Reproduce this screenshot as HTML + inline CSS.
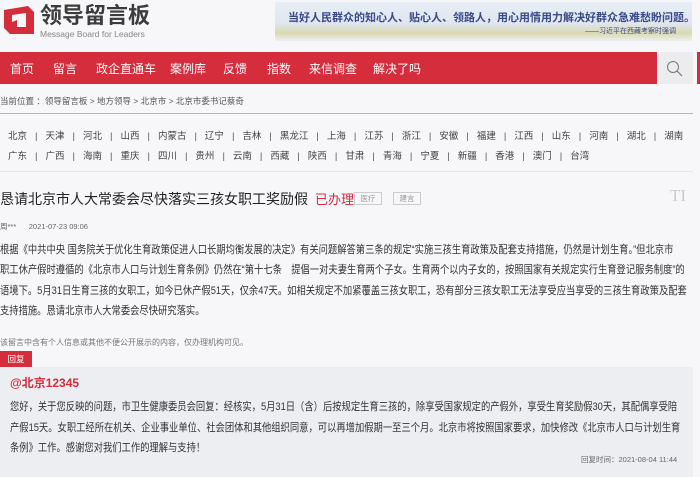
<!DOCTYPE html>
<html><head><meta charset="utf-8"><style>
*{margin:0;padding:0;box-sizing:border-box}
body{width:700px;height:477px;overflow:hidden;background:#f7f6f8;font-family:"Liberation Sans","Noto Sans CJK SC",sans-serif;color:#333;position:relative}
.a{position:absolute;white-space:nowrap}
.nav{position:absolute;left:0;top:52px;width:657px;height:32px;background:#d62d3c}
.nav span{position:absolute;top:8px;color:#fff;font-size:12px}
.prov{font-size:9.5px;color:#444}
.prov i{font-style:normal;margin:0 8px;color:#555}
.p{font-size:11px;color:#333;line-height:20.3px;white-space:nowrap;transform:scaleX(0.845);transform-origin:0 0}
</style></head><body>
<svg class="a" style="left:2px;top:4px" width="34" height="32" viewBox="0 0 34 32"><path d="M2 6 L26 2 L32 8 L32 30 L8 30 L2 24 Z" fill="#d62d3c"/><path d="M10 11 L24 9 L24 23 L15 23 L15 16 L10 18 Z" fill="#f7f6f8"/></svg>
<div class="a" style="left:40px;top:4px;font-size:22px;line-height:24px;font-weight:bold;color:#3c3c3c">领导留言板</div>
<div class="a" style="left:40px;top:29px;font-size:8.5px;line-height:10px;color:#888">Message Board for Leaders</div>
<div class="a" style="left:275px;top:2px;width:417px;height:39px;background:linear-gradient(180deg,#e8eef6 0%,#dfe6ef 55%,#d9d9b0 80%,#eef0f2 100%)"></div>
<div class="a" style="left:288px;top:9px;font-size:11px;font-weight:bold;color:#3a4a8a">当好人民群众的知心人、贴心人、领路人，用心用情用力解决好群众急难愁盼问题。</div>
<div class="a" style="left:585px;top:26px;font-size:7px;color:#3a4a8a">——习近平在西藏考察时强调</div>
<div class="nav"><span style="left:10px">首页</span><span style="left:53px">留言</span><span style="left:96px">政企直通车</span><span style="left:170px">案例库</span><span style="left:223px">反馈</span><span style="left:267px">指数</span><span style="left:309px">来信调查</span><span style="left:373px">解决了吗</span></div>
<div class="a" style="left:657px;top:52px;width:36px;height:32px;background:#ececef"></div>
<svg class="a" style="left:666px;top:60px" width="18" height="18" viewBox="0 0 18 18"><circle cx="7" cy="7" r="5.5" fill="none" stroke="#777" stroke-width="1"/><line x1="11" y1="11" x2="16" y2="16" stroke="#777" stroke-width="1.2"/></svg>
<div class="a" style="left:697px;top:52px;width:3px;height:32px;background:#d62d3c"></div>
<div class="a" style="left:0;top:95px;font-size:8.5px;color:#555">当前位置 ：领导留言板 &gt; 地方领导 &gt; 北京市 &gt; 北京市委书记蔡奇</div>
<div class="a" style="left:0;top:113px;width:693px;height:1px;background:#e7a0a8"></div>
<div class="a prov" style="left:8px;top:128px">北京<i>|</i>天津<i>|</i>河北<i>|</i>山西<i>|</i>内蒙古<i>|</i>辽宁<i>|</i>吉林<i>|</i>黑龙江<i>|</i>上海<i>|</i>江苏<i>|</i>浙江<i>|</i>安徽<i>|</i>福建<i>|</i>江西<i>|</i>山东<i>|</i>河南<i>|</i>湖北<i>|</i>湖南</div>
<div class="a prov" style="left:8px;top:148px">广东<i>|</i>广西<i>|</i>海南<i>|</i>重庆<i>|</i>四川<i>|</i>贵州<i>|</i>云南<i>|</i>西藏<i>|</i>陕西<i>|</i>甘肃<i>|</i>青海<i>|</i>宁夏<i>|</i>新疆<i>|</i>香港<i>|</i>澳门<i>|</i>台湾</div>
<div class="a" style="left:0;top:171px;width:693px;height:1px;background:#e6e6e6"></div>
<div class="a" style="left:0;top:189px;font-size:14px;color:#222">恳请北京市人大常委会尽快落实三孩女职工奖励假</div>
<div class="a" style="left:315px;top:189px;font-size:13px;color:#d62d3c">已办理</div>
<div class="a" style="left:354px;top:192px;width:28px;height:13px;border:1px solid #ccc;font-size:7.5px;color:#999;text-align:center;line-height:11px">医疗</div>
<div class="a" style="left:393px;top:192px;width:28px;height:13px;border:1px solid #ccc;font-size:7.5px;color:#999;text-align:center;line-height:11px">建言</div>
<div class="a" style="left:670px;top:186px;font-size:17px;color:#ccc;font-family:'Liberation Serif',serif">TI</div>
<div class="a" style="left:0;top:221px;font-size:7.5px;color:#666">周***&nbsp;&nbsp;&nbsp;&nbsp;&nbsp;&nbsp;2021-07-23 09:06</div>
<div class="a p" style="left:0;top:240px">根据《中共中央 国务院关于优化生育政策促进人口长期均衡发展的决定》有关问题解答第三条的规定“实施三孩生育政策及配套支持措施，仍然是计划生育。”但北京市<br>职工休产假时遵循的《北京市人口与计划生育条例》仍然在“第十七条　提倡一对夫妻生育两个子女。生育两个以内子女的，按照国家有关规定实行生育登记服务制度”的<br>语境下。5月31日生育三孩的女职工，如今已休产假51天，仅余47天。如相关规定不加紧覆盖三孩女职工，恐有部分三孩女职工无法享受应当享受的三孩生育政策及配套<br>支持措施。恳请北京市人大常委会尽快研究落实。</div>
<div class="a" style="left:0;top:337px;font-size:8px;color:#777">该留言中含有个人信息或其他不便公开展示的内容，仅办理机构可见。</div>
<div class="a" style="left:0;top:351px;width:32px;height:17px;background:#d62d3c;color:#fff;font-size:8.5px;text-align:center;line-height:17px">回复</div>
<div class="a" style="left:0;top:367px;width:693px;height:110px;background:#eceef2"></div>
<div class="a" style="left:10px;top:374px;font-size:12px;font-weight:bold;color:#d62d3c">@北京12345</div>
<div class="a p" style="left:10px;top:397px;line-height:20.5px">您好，关于您反映的问题，市卫生健康委员会回复：经核实，5月31日（含）后按规定生育三孩的，除享受国家规定的产假外，享受生育奖励假30天，其配偶享受陪<br>产假15天。女职工经所在机关、企业事业单位、社会团体和其他组织同意，可以再增加假期一至三个月。北京市将按照国家要求，加快修改《北京市人口与计划生育<br>条例》工作。感谢您对我们工作的理解与支持！</div>
<div class="a" style="left:581px;top:454px;font-size:7.5px;color:#666">回复时间：2021-08-04 11:44</div>
</body></html>
